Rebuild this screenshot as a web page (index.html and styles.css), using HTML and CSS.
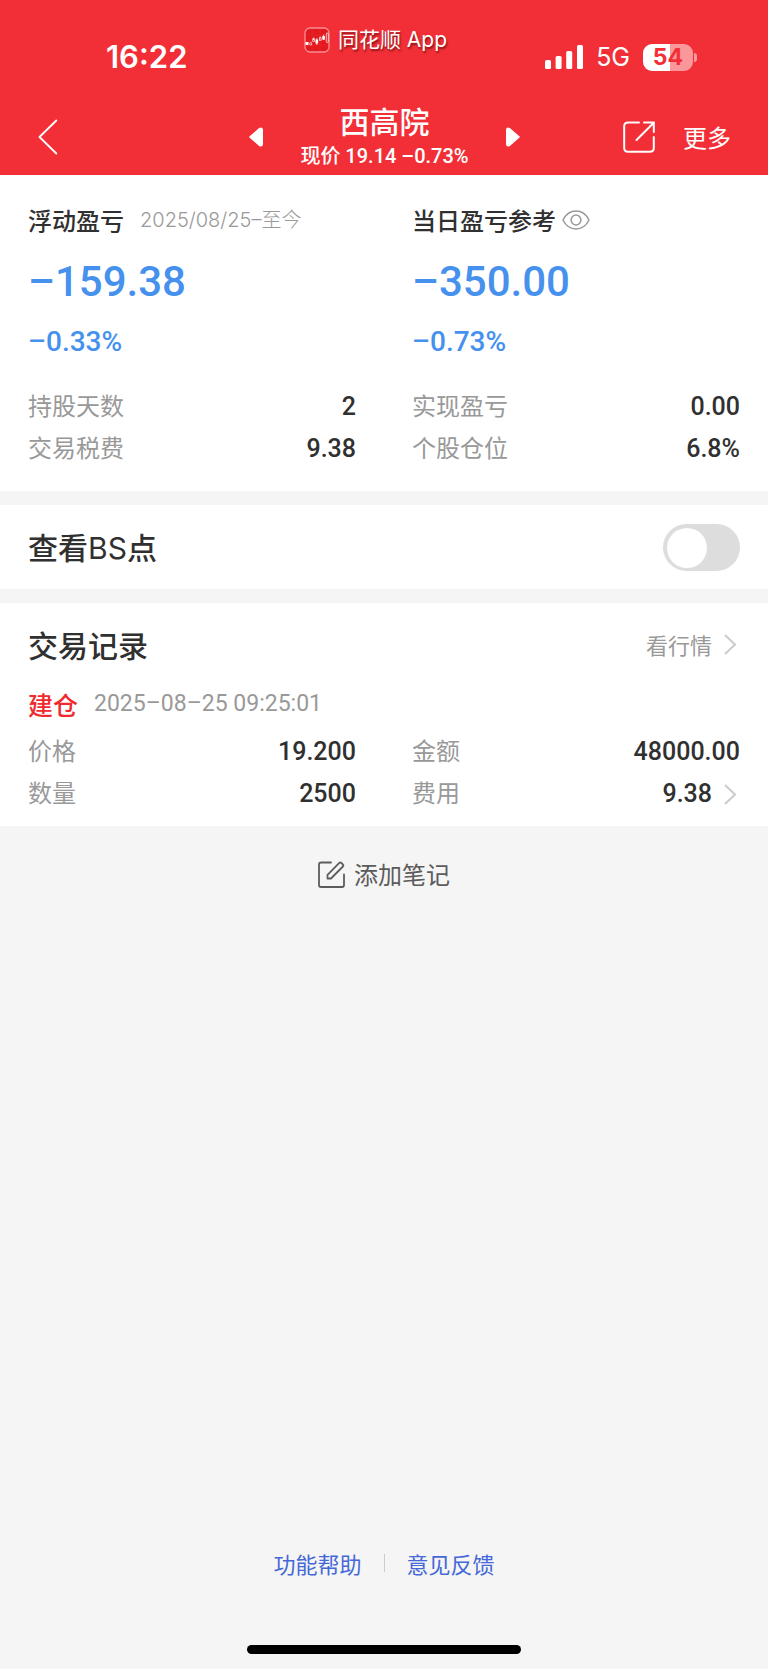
FILE: index.html
```html
<!DOCTYPE html>
<html lang="zh-CN">
<head>
<meta charset="utf-8">
<meta name="viewport" content="width=device-width, initial-scale=1">
<title>西高院</title>
<link rel="stylesheet" href="styles.css">
</head>
<body>
<div class="page">
  <header class="header">
    <div class="status">
      <span class="status-time">16:22</span>
      <span class="status-app">
        <svg class="app-icon" viewBox="0 0 26 26" width="26" height="26" aria-hidden="true">
          <rect x="1" y="1" width="24" height="24" rx="5" fill="#e3191f" stroke="#f98d90" stroke-width="1.3"/>
          <path d="M2 8H24M2 13H24M2 18H24M8 2V24M16 2V24" stroke="#e62c30" stroke-width=".6"/>
          <g fill="#fff"><rect x="1.5" y="15" width="3" height="3"/><rect x="11.5" y="12.5" width="2.6" height="4"/><rect x="18.3" y="9" width="2.6" height="3.6"/></g>
          <g fill="none" stroke="#fff" stroke-width=".7"><rect x="5.8" y="15.4" width="1.8" height="2.8" rx=".8"/><rect x="8.8" y="11.8" width="1.8" height="2.6"/><rect x="15.3" y="10.8" width="1.8" height="2.4"/><rect x="22.3" y="6" width="2" height="9.5" rx="1"/><path d="M9.7 10.5V12M12.8 11V18M16.2 9.5V11M19.6 7.5V13"/></g>
        </svg>
        <span>同花顺 App</span>
      </span>
      <span class="status-right">
        <svg viewBox="0 0 38 24" width="38" height="24" fill="#fff" aria-hidden="true"><rect x="0" y="15" width="6" height="9" rx="1.6"/><rect x="10.6" y="11" width="6" height="13" rx="1.6"/><rect x="21.2" y="6" width="6" height="18" rx="1.6"/><rect x="32" y="0" width="6" height="24" rx="1.6"/></svg>
        <span class="network">5G</span>
        <span class="battery"><span class="battery-level">54</span></span>
      </span>
    </div>
    <nav class="nav">
      <button class="icon-button" type="button" aria-label="返回">
        <svg viewBox="0 0 20 36" width="20" height="36" fill="none" stroke="#fff" stroke-width="1.8" stroke-linecap="round" stroke-linejoin="round"><path d="M18.3 1.5L1.5 18L18.3 34.500"/></svg>
      </button>
      <div class="stock">
        <button class="icon-button" type="button" aria-label="上一只">
          <svg viewBox="0 0 14 20" width="14" height="20" fill="#fff" stroke="#fff" stroke-width="2" stroke-linejoin="round"><path d="M1.300 10L10.500 2Q13 0.700 13 3V17Q13 19.300 10.500 18Z"/></svg>
        </button>
        <div class="stock-title">
          <h1 class="stock-name">西高院</h1>
          <p class="stock-price">现价 19.14 –0.73%</p>
        </div>
        <button class="icon-button" type="button" aria-label="下一只">
          <svg viewBox="0 0 14 20" width="14" height="20" fill="#fff" stroke="#fff" stroke-width="2" stroke-linejoin="round"><path d="M12.700 10L3.500 2Q1 0.700 1 3V17Q1 19.300 3.500 18Z"/></svg>
        </button>
      </div>
      <div class="nav-actions">
        <button class="icon-button" type="button" aria-label="分享">
          <svg viewBox="0 0 32 32" width="32" height="32" fill="none" stroke="#fff" stroke-width="2" stroke-linecap="round"><path d="M16 1.500H5Q1.200 1.500 1.200 5V27Q1.200 30.800 5 30.800H27Q30.800 30.800 30.800 27V16M21 1.500H30.800V11M30.500 2L13.500 19"/></svg>
        </button>
        <button class="more" type="button">更多</button>
      </div>
    </nav>
  </header>

  <main class="main">
    <section class="summary columns">
      <div>
        <div class="heading"><h2 class="heading-text">浮动盈亏</h2><span class="period">2025/08/25–至今</span></div>
        <p class="amount">–159.38</p>
        <p class="percent">–0.33%</p>
        <dl class="rows">
          <div class="row"><dt>持股天数</dt><dd>2</dd></div>
          <div class="row"><dt>交易税费</dt><dd>9.38</dd></div>
        </dl>
      </div>
      <div>
        <div class="heading"><h2 class="heading-text">当日盈亏参考</h2>
          <button class="icon-button eye" type="button" aria-label="显示或隐藏金额">
            <svg viewBox="0 0 28 20" width="28" height="20" fill="none" stroke="#999" stroke-width="1.500"><path d="M1 10C7 -2 21 -2 27 10C21 22 7 22 1 10Z"/><circle cx="14" cy="10" r="4.900"/></svg>
          </button>
        </div>
        <p class="amount">–350.00</p>
        <p class="percent">–0.73%</p>
        <dl class="rows">
          <div class="row"><dt>实现盈亏</dt><dd>0.00</dd></div>
          <div class="row"><dt>个股仓位</dt><dd>6.8%</dd></div>
        </dl>
      </div>
    </section>

    <section class="bs">
      <label class="title" for="bs-toggle">查看<span class="latin">BS</span>点</label>
      <input class="toggle" id="bs-toggle" type="checkbox" role="switch">
    </section>

    <section class="records">
      <div class="records-head">
        <h2 class="title">交易记录</h2>
        <a class="quote" href="#quote">看行情
          <svg class="chevron" viewBox="0 0 12 21" width="12" height="21"><path d="M1 1L11 10.500L1 20"/></svg>
        </a>
      </div>
      <div class="trade"><span class="trade-type">建仓</span><time class="trade-time" datetime="2025-08-25T09:25:01">2025–08–25 09:25:01</time></div>
      <dl class="columns trade-rows">
        <div class="row"><dt>价格</dt><dd>19.200</dd></div>
        <div class="row"><dt>金额</dt><dd>48000.00</dd></div>
        <div class="row"><dt>数量</dt><dd>2500</dd></div>
        <div class="row"><dt>费用</dt><dd class="fee">9.38
          <svg class="chevron" viewBox="0 0 12 21" width="12" height="21" aria-hidden="true"><path d="M1 1L11 10.500L1 20"/></svg></dd></div>
      </dl>
    </section>
    <button class="note" type="button">
      <svg viewBox="0 0 27 27" width="27" height="27" fill="none" stroke="#5c5c5c" stroke-width="1.800" stroke-linecap="round" stroke-linejoin="round"><path d="M13 1.500H3Q1 1.500 1 3.500V24Q1 26 3 26H24Q26 26 26 24V13.500"/><path d="M9.500 17.500V13.800L21.300 1.900Q22.300 1 23.300 1.900L24.900 3.500Q25.800 4.500 24.900 5.500L13 17.500Z"/></svg>
      添加笔记
    </button>
  </main>

  <footer class="footer">
    <div class="links"><a href="#help">功能帮助</a><span class="divider"></span><a href="#feedback">意见反馈</a></div>
    <div class="home-bar"></div>
  </footer>
</div>
</body>
</html>
```
FILE: styles.css
```css
* { box-sizing: border-box; }

body, h1, h2, p, dl, dd { margin: 0; }

body {
  background: #f5f5f5;
  color: #303030;
  font-family: "Noto Sans CJK SC", sans-serif;
  font-size: 24px;
  font-weight: 400;
}

button {
  padding: 0;
  border: 0;
  background: none;
  color: inherit;
  font: inherit;
}

a { text-decoration: none; }

svg { display: block; flex: none; }

.page {
  display: flex;
  flex-direction: column;
  min-height: 100vh;
}

.header { background: #f22f37; color: #fff; }

.status {
  display: grid;
  grid-template-columns: 1fr auto 1fr;
  align-items: center;
  height: 98px;
  padding: 16px 71px 0 54px;
}

.status-time {
  padding-left: 52px;
  font: 600 31px/40px Inter, sans-serif;
}

.status-app {
  display: flex;
  align-items: center;
  align-self: start;
  gap: 8px;
  font-family: Inter, "Noto Sans CJK SC", sans-serif;
  font-size: 21px;
  line-height: 48px;
  text-shadow: 1px 2px 2px rgba(60, 0, 0, 0.6);
}

.status-right {
  display: flex;
  align-items: center;
  justify-content: flex-end;
  gap: 13px;
}

.network { font: 400 25px/28px Inter, sans-serif; }

.battery {
  position: relative;
  width: 54px;
}

.battery-level {
  display: block;
  width: 50px;
  border-radius: 9px;
  background: linear-gradient(90deg, #fff 54%, #f9979b 54%);
  color: #f22f37;
  font: 700 23px/27px Inter, sans-serif;
  text-align: center;
}

.battery::after {
  content: "";
  position: absolute;
  top: 9px;
  right: 0;
  width: 3px;
  height: 9px;
  border-radius: 0 4px 4px 0;
  background: #f9979b;
}

.nav {
  display: grid;
  grid-template-columns: 1fr 272px 1fr;
  align-items: center;
  min-height: 77px;
  padding: 0 37px 0 38px;
}

.icon-button { display: block; flex: none; justify-self: start; }

.stock {
  display: flex;
  align-items: center;
  justify-content: space-between;
}

.stock-title { text-align: center; white-space: nowrap; }

.stock-name { font-size: 30px; font-weight: 500; line-height: 38px; }

.stock-price {
  font-family: Roboto, "Noto Sans CJK SC", sans-serif;
  font-size: 20px;
  font-weight: 500;
  line-height: 34px;
}

.nav-actions {
  display: flex;
  align-items: center;
  justify-content: flex-end;
  gap: 28px;
}

.more { line-height: 36px; }

.main { flex: 1; }

.summary, .bs, .records { background: #fff; padding-inline: 28px; }

.columns {
  display: grid;
  grid-template-columns: 1fr 1fr;
  column-gap: 56px;
}

.summary { padding-block: 27px 23px; }

.heading { display: flex; align-items: center; line-height: 36px; }

.heading-text { font-size: 24px; font-weight: 500; }

.period {
  margin-left: 16px;
  color: #999;
  font-family: Inter, "Noto Sans CJK SC", sans-serif;
  font-size: 20px;
  font-weight: 300;
}

.eye { margin-left: 6px; }

.amount, .percent {
  color: #4691ee;
  font-family: Roboto, sans-serif;
  font-weight: 500;
}

.amount { margin-top: 16px; font-size: 42px; line-height: 56px; }

.percent { margin-top: 14px; font-size: 28px; line-height: 36px; }

.rows { margin-top: 24px; }

.row {
  display: flex;
  align-items: baseline;
  justify-content: space-between;
  line-height: 42px;
}

.row dt { color: #999; }

.row dd {
  font-family: Roboto, sans-serif;
  font-size: 25px;
  font-weight: 500;
  line-height: 36px;
}

.bs {
  display: flex;
  align-items: center;
  justify-content: space-between;
  min-height: 84px;
  margin-block: 14px;
}

.title { font-size: 30px; font-weight: 500; line-height: 40px; }

.latin { font-family: Inter, sans-serif; font-weight: 400; }

.toggle {
  appearance: none;
  width: 77px;
  height: 47px;
  margin: 0;
  padding: 4px;
  border-radius: 24px;
  background: #ddd;
}

.toggle::before {
  content: "";
  display: block;
  width: 40px;
  height: 40px;
  border-radius: 50%;
  background: #fff;
}

.toggle:checked { background: #f22f37; }

.toggle:checked::before { margin-left: auto; }

.records { padding-block: 21px 13px; }

.records-head { display: flex; align-items: center; justify-content: space-between; }

.quote {
  display: flex;
  align-items: center;
  gap: 12px;
  padding-right: 4px;
  color: #999;
  font-size: 22px;
}

.chevron { fill: none; stroke: #ccc; stroke-width: 2; }

.trade {
  display: flex;
  align-items: center;
  gap: 16px;
  margin-top: 22px;
  line-height: 36px;
}

.trade-type { color: #f02b30; font-size: 25px; font-weight: 500; }

.trade-time { color: #999; font-family: Roboto, sans-serif; font-size: 23px; }

.trade-rows { margin-top: 7px; }

.fee {
  display: flex;
  align-items: center;
  gap: 12px;
  padding-right: 4px;
}

.note {
  display: flex;
  align-items: center;
  gap: 9px;
  margin: 30px auto 0;
  color: #5c5c5c;
  line-height: 36px;
}

.footer {
  display: flex;
  flex-direction: column;
  align-items: center;
  padding-bottom: 15px;
}

.links {
  display: flex;
  align-items: center;
  gap: 22px;
  font-size: 22px;
  line-height: 36px;
}

.links a { color: #4468d8; }

.divider { width: 1px; height: 18px; background: #ccc; }

.home-bar {
  width: 274px;
  height: 9px;
  margin-top: 64px;
  border-radius: 5px;
  background: #000;
}
```
